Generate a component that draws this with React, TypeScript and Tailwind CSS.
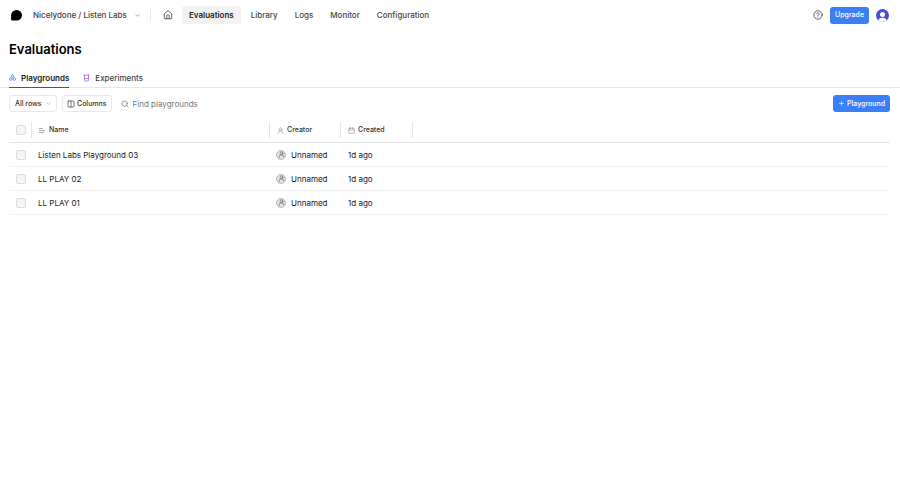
import type { ReactNode } from "react";
import { Calendar, ChevronDown, CircleHelp, Columns2, House, Plus, Search, UserRound } from "lucide-react";

const navLinks = ["Evaluations", "Library", "Logs", "Monitor", "Configuration"];
const playgrounds = ["Listen Labs Playground 03", "LL PLAY 02", "LL PLAY 01"];

function Logo() {
  return (
    <svg viewBox="0 0 11 11" className="size-[11px]" aria-hidden="true">
      <path d="M5.6 0A5.3 5.3 0 0 1 11 5.3 5.3 5.3 0 0 1 5.6 10.6H1.1A1 1 0 0 1 .1 9.6V5.5A5.4 5.4 0 0 1 5.6 0Z" fill="#000" />
    </svg>
  );
}

function ShapesIcon() {
  return (
    <svg viewBox="0 0 14 14" className="size-[7px]" fill="#dbe8ff" stroke="#4a86f0" strokeWidth="1.4" strokeLinejoin="round" aria-hidden="true">
      <path d="M7 1 9.4 2.4V5.3L7 6.7 4.6 5.3V2.4Z" />
      <path d="M3.6 7.2 6.2 8.6V11.5L3.6 13 1 11.5V8.6Z" />
      <path d="M10.4 7.2 13 8.6V11.5L10.4 13 7.8 11.5V8.6Z" />
    </svg>
  );
}

function BeakerIcon() {
  return (
    <svg viewBox="0 0 14 16" className="h-2 w-[7px]" fill="none" stroke="#b06be8" strokeWidth="1.8" strokeLinecap="round" aria-hidden="true">
      <path d="M2 2H12M3 2V12A2 2 0 0 0 5 14H9A2 2 0 0 0 11 12V2M3.5 9H10.5" />
    </svg>
  );
}

function TextIcon() {
  return (
    <svg viewBox="0 0 7 7" className="size-[7px]" stroke="#aaa" strokeWidth="1" aria-hidden="true">
      <path d="M0 1.5H4M0 3.5H6M0 5.5H5" />
    </svg>
  );
}

function Avatar() {
  return (
    <svg viewBox="0 0 26 26" className="size-[13px]" aria-hidden="true">
      <clipPath id="avatar-clip">
        <circle cx="13" cy="13" r="13" />
      </clipPath>
      <g clipPath="url(#avatar-clip)">
        <rect width="26" height="26" fill="#4450d2" />
        <circle cx="13" cy="11" r="5" fill="#fff" />
        <ellipse cx="13" cy="23.5" rx="8" ry="6" fill="#fff" />
      </g>
    </svg>
  );
}

function Checkbox({ label }: { label: string }) {
  return (
    <input
      type="checkbox"
      aria-label={label}
      className="ml-[7px] block size-[10px] appearance-none rounded-xs border border-[#dcdcdc] bg-[#f5f5f5] checked:bg-[#3b7cf0]"
    />
  );
}

function HeaderCell({ icon, children }: { icon: ReactNode; children: string }) {
  return (
    <th className="p-0 font-medium">
      <div className="flex h-4 items-center gap-[3px] border-r border-[#e6e6e6] pl-[7px]">
        {icon}
        {children}
      </div>
    </th>
  );
}

export default function App() {
  return (
    <div className="min-h-screen bg-white font-['Inter','Liberation_Sans',sans-serif] text-[8px] leading-3 text-[#1a1a1a]">
      <header className="flex h-[30px] items-center px-[11px]">
        <Logo />
        <label className="relative ml-[11px] flex items-center">
          <select aria-label="Project" className="appearance-none bg-transparent pr-[14px] font-medium text-[#444]">
            <option>Nicelydone / Listen Labs</option>
          </select>
          <ChevronDown className="pointer-events-none absolute right-0 size-[7px] text-[#777]" />
        </label>
        <div className="ml-[9px] h-3 w-px bg-[#e8e8e8]" />
        <a href="#home" aria-label="Home" className="ml-3 text-[#444]">
          <House className="size-[10px]" />
        </a>
        <nav className="ml-[9px] flex gap-px">
          {navLinks.map((name) => (
            <a
              key={name}
              href={"#" + name.toLowerCase()}
              className={
                name === "Evaluations"
                  ? "mr-px rounded-[3px] bg-[#f2f2f2] px-[7px] py-[3px] font-semibold text-[#1a1a1a]"
                  : "px-2 py-[3px] font-medium text-[#444]"
              }
            >
              {name}
            </a>
          ))}
        </nav>
        <button aria-label="Help" className="ml-auto text-[#444]">
          <CircleHelp className="size-[10px]" />
        </button>
        <button className="ml-[7px] h-[17px] rounded-[3px] bg-[#3b7ff5] px-[5px] text-[7px] font-medium text-white">Upgrade</button>
        <button aria-label="Account" className="ml-[7px]">
          <Avatar />
        </button>
      </header>

      <main>
        <h1 className="px-[9px] pt-[9px] text-[13px] leading-5 font-semibold text-black">Evaluations</h1>

        <div className="mt-[9px] flex h-5 gap-[14px] border-b border-[#e6e6e6] px-[9px]">
          <a href="#playgrounds" className="-mb-px flex items-center gap-[5px] border-b border-[#555] font-semibold">
            <ShapesIcon />
            Playgrounds
          </a>
          <a href="#experiments" className="flex items-center gap-[5px] font-medium text-[#444]">
            <BeakerIcon />
            Experiments
          </a>
        </div>

        <div className="flex items-center gap-[5px] px-[9px] pr-[10px] pt-[7px] text-[7px]">
          <label className="relative flex items-center">
            <select aria-label="Rows shown" className="h-[17px] appearance-none rounded-[3px] border border-[#e8e8e8] bg-white pr-[14px] pl-[5px] font-medium text-[#333]">
              <option>All rows</option>
            </select>
            <ChevronDown className="pointer-events-none absolute right-[5px] size-[7px] text-[#999]" />
          </label>
          <button className="flex h-[17px] items-center gap-[2px] rounded-[3px] border border-[#e8e8e8] px-1 font-medium text-[#333]">
            <Columns2 className="size-2" />
            Columns
          </button>
          <label className="ml-1 flex flex-1 items-center gap-1 text-[8px] text-[#666]">
            <Search className="size-2" />
            <input type="search" aria-label="Find playgrounds" placeholder="Find playgrounds" className="min-w-0 flex-1 outline-none placeholder:text-[#777]" />
          </label>
          <button className="flex h-[17px] items-center gap-[2px] rounded-[3px] bg-[#3b7ff5] px-[5px] font-medium text-white">
            <Plus className="size-[7px]" />
            Playground
          </button>
        </div>

        <div className="px-[9px] pr-[10px] pt-[6px]">
          <table className="w-full table-fixed border-separate border-spacing-0 text-left">
            <colgroup>
              <col className="w-[23px]" />
              <col className="w-[238px]" />
              <col className="w-[71px]" />
              <col className="w-[72px]" />
              <col />
            </colgroup>
            <thead className="text-[7px] text-[#333]">
              <tr className="h-[25px] *:border-b *:border-[#e4e4e4]">
                <th className="p-0">
                  <div className="flex h-4 items-center border-r border-[#e6e6e6]">
                    <Checkbox label="Select all rows" />
                  </div>
                </th>
                <HeaderCell icon={<TextIcon />}>Name</HeaderCell>
                <HeaderCell icon={<UserRound className="size-[7px] text-[#888]" />}>Creator</HeaderCell>
                <HeaderCell icon={<Calendar className="size-[7px] text-[#888]" />}>Created</HeaderCell>
                <td />
              </tr>
            </thead>
            <tbody>
              {playgrounds.map((name) => (
                <tr key={name} className="h-6 *:border-b *:border-[#f1f1f1]">
                  <td className="p-0">
                    <Checkbox label={"Select " + name} />
                  </td>
                  <td className="p-0 pl-[6px]">{name}</td>
                  <td className="p-0 pl-[6px]">
                    <div className="flex items-center gap-[5px]">
                      <span className="flex size-[10px] items-center justify-center rounded-full border border-[#b5b5bb] bg-[#e2e2e8] text-[#555]">
                        <UserRound className="size-[7px]" />
                      </span>
                      Unnamed
                    </div>
                  </td>
                  <td className="p-0 pl-[7px]">1d ago</td>
                  <td />
                </tr>
              ))}
            </tbody>
          </table>
        </div>
      </main>
    </div>
  );
}
